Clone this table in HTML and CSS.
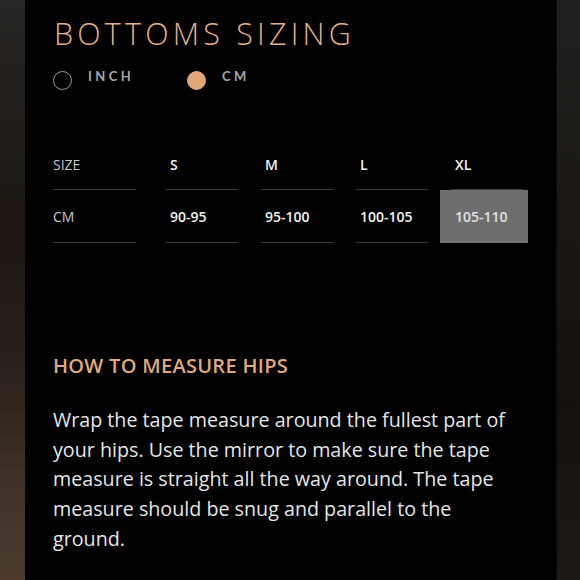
FILE: index.html
```html
<!DOCTYPE html>
<html>
<head>
<meta charset="utf-8">
<link rel="stylesheet" href="styles.css">
</head>
<body>
<div class="frame">
  <aside class="side side-left"></aside>
  <main class="panel">
    <h1 class="title">BOTTOMS SIZING</h1>
    <div class="units">
      <label class="unit"><span class="radio"></span><span class="unit-label">INCH</span></label>
      <label class="unit"><span class="radio radio-on"></span><span class="unit-label">CM</span></label>
    </div>
    <div class="table">
      <div class="cell cell-head cell-label">SIZE</div>
      <div class="cell cell-head">S</div>
      <div class="cell cell-head">M</div>
      <div class="cell cell-head">L</div>
      <div class="cell cell-head cell-last">XL</div>
      <div class="cell cell-data cell-label">CM</div>
      <div class="cell cell-data">90-95</div>
      <div class="cell cell-data">95-100</div>
      <div class="cell cell-data">100-105</div>
      <div class="cell cell-data cell-hl">105-110</div>
    </div>
    <h2 class="heading">HOW TO MEASURE HIPS</h2>
    <p class="text">Wrap the tape measure around the fullest part of your hips. Use the mirror to make sure the tape measure is straight all the way around. The tape measure should be snug and parallel to the ground.</p>
  </main>
  <aside class="side side-right"></aside>
</div>
</body>
</html>
```
FILE: styles.css
```css
* { box-sizing: border-box; }
html, body { margin: 0; padding: 0; background: #000; }
body { width: 580px; height: 580px; overflow: hidden; font-family: "Open Sans", "Lato", sans-serif; }
.frame { display: flex; height: 580px; }
.side { height: 580px; }
.side-left {
  width: 25px;
  background: linear-gradient(180deg, #262626 0%, #1e1b19 25%, #1b1612 40%, #2a221c 65%, #41332a 85%, #4a3b2e 100%);
}
.side-right {
  width: 24px;
  background: linear-gradient(180deg, #1f1f1f 0%, #181716 40%, #141211 70%, #1b1815 100%);
  border-left: 1px solid #0c0c0c;
}
.panel { width: 531px; background: #000; padding: 0 0 0 28px; }
.title {
  margin: 13px 0 0 1px;
  font-size: 30.5px;
  font-weight: 300;
  letter-spacing: 4.2px;
  color: #e2b189;
  line-height: 40px;
}
.units { display: flex; align-items: center; margin-top: 17px; height: 20px; }
.unit { display: flex; align-items: center; }
.unit + .unit { margin-left: 53px; }
.radio { width: 19px; height: 19px; border-radius: 50%; border: 1.5px solid #9a9a9a; }
.radio-on { background: #e0a878; border-color: #e0a878; }
.unit-label {
  margin-left: 16px;
  margin-top: -9px;
  font-family: "Lato", sans-serif;
  font-size: 13px;
  font-weight: 700;
  letter-spacing: 3.4px;
  color: #a8a8a8;
}
.table {
  display: grid;
  grid-template-columns: 90px 72px 72px 72px 72px;
  column-gap: 23px;
  margin-top: 56px;
}
.table > .cell:nth-child(5n+1) { margin-right: 7px; }
.cell {
  font-size: 14px;
  color: #f2f2f2;
  font-weight: 600;
  border-bottom: 1px solid #3c3c3c;
  padding-left: 4px;
  display: flex;
  align-items: center;
}
.cell-head { height: 44px; padding-bottom: 7px; }
.cell-data { height: 53px; padding-top: 1px; }
.cell-label { font-weight: 400; color: #c8c8c8; padding-left: 0; }
.cell-hl {
  background: #6e6e6e;
  color: #e0e0e0;
  margin-left: -11px;
  margin-right: -5px;
  padding-left: 15px;
  border-bottom-color: #6e6e6e;
}
.heading {
  margin: 111px 0 0 0;
  font-size: 20px;
  font-weight: 600;
  color: #e0aa7c;
  line-height: 24px;
  letter-spacing: 0.3px;
}
.text {
  margin: 27px 0 0 0;
  width: 468px;
  font-size: 19.7px;
  font-weight: 400;
  line-height: 29.7px;
  color: #e6e6e6;
}
```
